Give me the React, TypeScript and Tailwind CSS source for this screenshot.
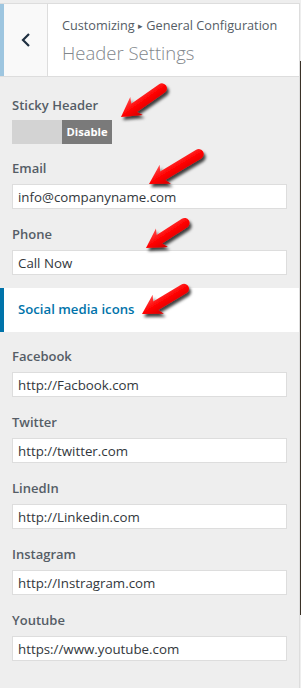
import React from "react";

type Field = { label: string; value: string };

const topFields: Field[] = [
  { label: "Email", value: "info@companyname.com" },
  { label: "Phone", value: "Call Now" },
];

const socialFields: Field[] = [
  { label: "Facebook", value: "http://Facbook.com" },
  { label: "Twitter", value: "http://twitter.com" },
  { label: "LinedIn", value: "http://Linkedin.com" },
  { label: "Instagram", value: "http://Instragram.com" },
  { label: "Youtube", value: "https://www.youtube.com" },
];

// red callout arrows, tip position + rotation + length
const arrows = [
  { x: 121, y: 117, rot: -35, len: 50 },
  { x: 149, y: 184, rot: -31, len: 58 },
  { x: 146, y: 248, rot: -33, len: 46 },
  { x: 142, y: 314, rot: -31, len: 49 },
];

function FieldBlock({ label, value, last }: Field & { last?: boolean }) {
  return (
    <div className={last ? "" : "mb-[15px]"}>
      <div className="h-[20px] text-[13px] leading-[20px] font-semibold text-[#555d66]">
        {label}
      </div>
      <input
        readOnly
        value={value}
        className="mt-[6px] block h-[25px] w-[275px] border border-[#dddddd] bg-white px-[5px] text-[13.3px] text-[#32373c] outline-none"
      />
    </div>
  );
}

function Arrows() {
  return (
    <svg className="pointer-events-none absolute left-0 top-0" width={301} height={688}>
      <defs>
        <filter id="shadow" x="-50%" y="-50%" width="200%" height="200%">
          <feDropShadow dx="2" dy="3" stdDeviation="1.4" floodColor="#000" floodOpacity="0.75" />
        </filter>
        <linearGradient id="red" x1="0" y1="-11" x2="0" y2="11" gradientUnits="userSpaceOnUse">
          <stop offset="0" stopColor="#ff4a4a" />
          <stop offset="0.5" stopColor="#ff0000" />
          <stop offset="1" stopColor="#d00000" />
        </linearGradient>
      </defs>
      {arrows.map((a, i) => (
        <g key={i} transform={`translate(${a.x} ${a.y})`} filter="url(#shadow)">
          <g transform={`rotate(${a.rot})`}>
            <path
              d={`M0 0 L19 -11 L16 -5 L${a.len} -5 A5 5 0 0 1 ${a.len} 5 L16 5 L19 11 Z`}
              fill="url(#red)"
            />
          </g>
        </g>
      ))}
    </svg>
  );
}

export default function App() {
  return (
    <div className="relative h-[688px] w-[301px] overflow-hidden bg-[#eeeeee] font-['Open_Sans',sans-serif]">
      <div className="h-[688px] w-[300px] border-r border-[#dddddd]">
        {/* header */}
        <div className="mt-[3px] flex h-[74px] border-y border-[#dddddd] bg-white">
          <div className="w-[4px] bg-[#9ec6e0]" />
          <div className="flex w-[44px] items-center justify-center border-r border-[#dddddd] bg-[#f9f9f9]">
            <svg width="10" height="14" viewBox="0 0 10 14">
              <path d="M8 1 L2 7 L8 13" fill="none" stroke="#1f2f40" strokeWidth="2.2" />
            </svg>
          </div>
          <div className="pl-[14px] pt-[12px]">
            <div className="text-[12.7px] leading-[18px] text-[#555d66]">
              Customizing <span className="text-[9px] align-[1px]">▸</span> General Configuration
            </div>
            <div className="mt-[4px] text-[18.5px] font-light leading-[28px] text-[#82878c]">
              Header Settings
            </div>
          </div>
        </div>

        {/* general options */}
        <div className="px-[12px] pt-[18px]">
          <div className="h-[20px] text-[13px] leading-[20px] font-semibold text-[#555d66]">
            Sticky Header
          </div>
          <div className="mt-[5px] flex h-[24px] w-[100px]">
            <div className="w-[50px] bg-[#d3d3d3]" />
            <div className="flex w-[50px] items-center justify-center bg-[#7a7a7a] text-[11.2px] font-bold text-white">
              Disable
            </div>
          </div>
          <div className="mt-[14px]">
            {topFields.map((f, i) => (
              <FieldBlock key={f.label} {...f} last={i === topFields.length - 1} />
            ))}
          </div>
        </div>

        {/* section title */}
        <div className="mt-[13px] flex h-[44px] items-center border-l-4 border-[#0073aa] bg-white pl-[14px] text-[13.2px] font-semibold text-[#0073aa]">
          Social media icons
        </div>

        {/* social links */}
        <div className="px-[12px] pt-[14px]">
          {socialFields.map((f, i) => (
            <FieldBlock key={f.label} {...f} last={i === socialFields.length - 1} />
          ))}
        </div>
      </div>

      {/* scrollbar edge */}
      <div className="absolute right-0 top-[61px] h-[554px] w-[1px] bg-[#3a3127]" />

      <Arrows />
    </div>
  );
}
